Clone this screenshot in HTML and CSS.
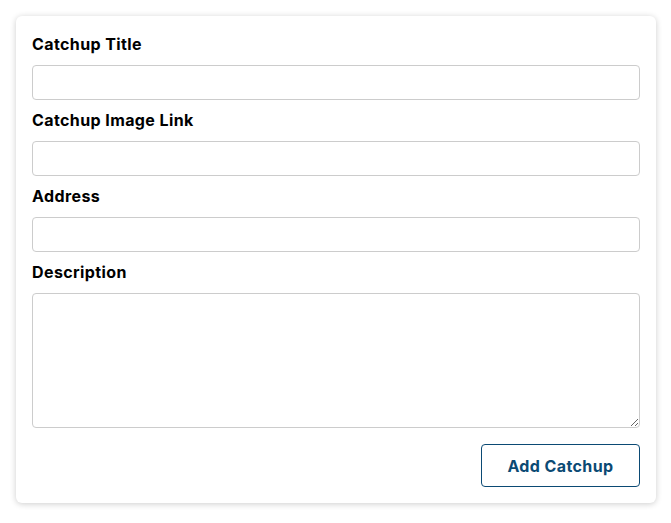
FILE: index.html
```html
<!DOCTYPE html>
<html>
<head>
<meta charset="utf-8">
<link rel="stylesheet" href="styles.css">
</head>
<body>
<form class="card">
  <div class="field">
    <label class="label" for="title">Catchup Title</label>
    <input class="input" type="text" id="title">
  </div>
  <div class="field">
    <label class="label" for="image">Catchup Image Link</label>
    <input class="input" type="url" id="image">
  </div>
  <div class="field">
    <label class="label" for="address">Address</label>
    <input class="input" type="text" id="address">
  </div>
  <div class="field field-last">
    <label class="label" for="description">Description</label>
    <textarea class="textarea" id="description"></textarea>
  </div>
  <div class="actions">
    <button class="button" type="button">Add Catchup</button>
  </div>
</form>
</body>
</html>
```
FILE: styles.css
```css
* { box-sizing: border-box; }
html, body { margin: 0; background: #fff; }
body {
  padding: 16px 15px 20px 16px;
  font-family: "Inter", "Open Sans", sans-serif;
}
.card {
  background: #fff;
  border-radius: 6px;
  box-shadow: 0 1px 6px rgba(0, 0, 0, 0.2);
  padding: 16px;
  display: flex;
  flex-direction: column;
}
.field {
  display: flex;
  flex-direction: column;
  margin-bottom: 8px;
}
.field-last { margin-bottom: 16px; }
.label {
  font-weight: 700;
  font-size: 16px;
  line-height: 24px;
  letter-spacing: 0.4px;
  color: #000;
  margin-bottom: 9px;
}
.input {
  height: 35px;
  border: 1px solid #ccc;
  border-radius: 4px;
  font: inherit;
  padding: 4px 8px;
}
.textarea {
  height: 135px;
  border: 1px solid #ccc;
  border-radius: 4px;
  font: inherit;
  padding: 4px 8px;
  resize: vertical;
}
.actions {
  display: flex;
  justify-content: flex-end;
}
.button {
  width: 159px;
  height: 43px;
  background: #fff;
  border: 1px solid #0b4a74;
  border-radius: 4px;
  color: #0b4a74;
  font-family: inherit;
  font-weight: 700;
  font-size: 16px;
  letter-spacing: 0.4px;
  cursor: pointer;
}
```
